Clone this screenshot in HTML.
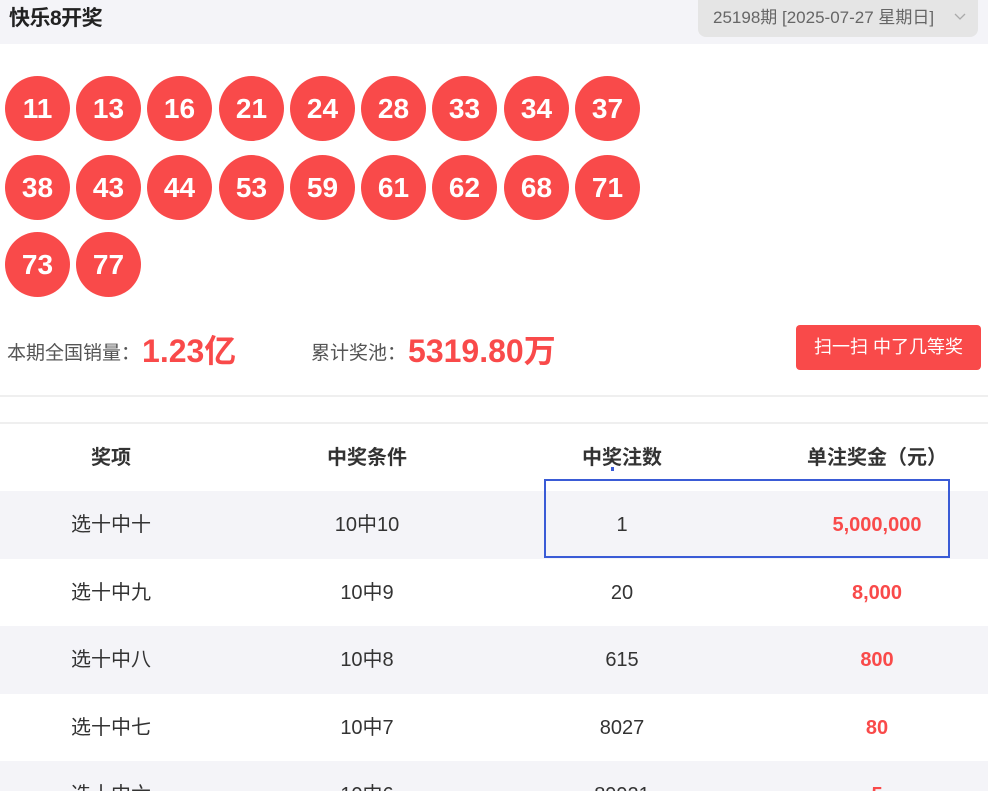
<!DOCTYPE html>
<html><head><meta charset="utf-8">
<style>
*{margin:0;padding:0;box-sizing:border-box}
html,body{width:988px;height:791px;overflow:hidden}
body{background:#fff;font-family:"Liberation Sans","Noto Sans CJK SC",sans-serif;position:relative;color:#333}
.hdr{position:absolute;left:0;top:0;width:988px;height:44px;background:#f4f4f8}
.title{position:absolute;left:9px;top:2px;font-size:21px;font-weight:bold;color:#222;letter-spacing:-0.5px}
.dd{position:absolute;left:698px;top:-8px;width:280px;height:45px;background:#e5e5e5;border-radius:8px;font-size:17px;color:#666;padding:11px 0 0 15px;white-space:nowrap}
.dd svg{position:absolute;right:12px;top:21px}
.ball{position:absolute;width:65px;height:65px;border-radius:50%;background:#f94a4a;color:#fff;font-weight:bold;font-size:28px;text-align:center;line-height:65px}
.st{position:absolute;top:326px;font-size:19px;color:#555;white-space:nowrap}
.st b{color:#f94a4a;font-size:32px;vertical-align:-3px;margin-left:2px}
.btn{position:absolute;left:796px;top:325px;width:185px;height:45px;background:#f94a4a;border-radius:4px;color:#fff;font-size:18px;text-align:center;line-height:45px}
.ln{position:absolute;left:0;width:988px;height:2px;background:#efefef}
.row{position:absolute;left:0;width:988px;height:68px;font-size:20px;color:#333}
.row div{position:absolute;top:0;line-height:68px;text-align:center;width:220px;white-space:nowrap}
.c1{left:1px}.c2{left:257px}.c3{left:512px}.c4{left:767px}
.g{background:#f4f4f8}
.th{font-weight:bold;color:#333}
.r{color:#f94a4a;font-weight:bold}
.box{position:absolute;left:544px;top:479px;width:406px;height:79px;border:2px solid #3a5bd6}
</style></head><body>
<div class="hdr"></div>
<div class="title">快乐8开奖</div>
<div class="dd">25198期 [2025-07-27 星期日]<svg width="12" height="8" viewBox="0 0 12 8"><path d="M1 1 L6 6 L11 1" fill="none" stroke="#aaa" stroke-width="1.3"/></svg></div>

<div class="ball" style="left:5px;top:76px">11</div>
<div class="ball" style="left:76px;top:76px">13</div>
<div class="ball" style="left:147px;top:76px">16</div>
<div class="ball" style="left:219px;top:76px">21</div>
<div class="ball" style="left:290px;top:76px">24</div>
<div class="ball" style="left:361px;top:76px">28</div>
<div class="ball" style="left:432px;top:76px">33</div>
<div class="ball" style="left:504px;top:76px">34</div>
<div class="ball" style="left:575px;top:76px">37</div>

<div class="ball" style="left:5px;top:155px">38</div>
<div class="ball" style="left:76px;top:155px">43</div>
<div class="ball" style="left:147px;top:155px">44</div>
<div class="ball" style="left:219px;top:155px">53</div>
<div class="ball" style="left:290px;top:155px">59</div>
<div class="ball" style="left:361px;top:155px">61</div>
<div class="ball" style="left:432px;top:155px">62</div>
<div class="ball" style="left:504px;top:155px">68</div>
<div class="ball" style="left:575px;top:155px">71</div>

<div class="ball" style="left:5px;top:232px">73</div>
<div class="ball" style="left:76px;top:232px">77</div>

<div class="st" style="left:7px">本期全国销量：<b>1.23亿</b></div>
<div class="st" style="left:311px">累计奖池：<b>5319.80万</b></div>
<div class="btn">扫一扫 中了几等奖</div>

<div class="ln" style="top:395px"></div>
<div class="ln" style="top:422px"></div>

<div class="row th" style="top:424px"><div class="c1">奖项</div><div class="c2">中奖条件</div><div class="c3">中奖注数</div><div class="c4">单注奖金（元）</div></div>
<div style="position:absolute;left:611px;top:467px;width:3px;height:4px;background:#3a5bd6"></div>
<div class="row g" style="top:491px"><div class="c1">选十中十</div><div class="c2">10中10</div><div class="c3">1</div><div class="c4 r">5,000,000</div></div>
<div class="row" style="top:559px"><div class="c1">选十中九</div><div class="c2">10中9</div><div class="c3">20</div><div class="c4 r">8,000</div></div>
<div class="row g" style="top:626px"><div class="c1">选十中八</div><div class="c2">10中8</div><div class="c3">615</div><div class="c4 r">800</div></div>
<div class="row" style="top:694px"><div class="c1">选十中七</div><div class="c2">10中7</div><div class="c3">8027</div><div class="c4 r">80</div></div>
<div class="row g" style="top:761px"><div class="c1">选十中六</div><div class="c2">10中6</div><div class="c3">89921</div><div class="c4 r">5</div></div>
<div class="box"></div>
</body></html>
